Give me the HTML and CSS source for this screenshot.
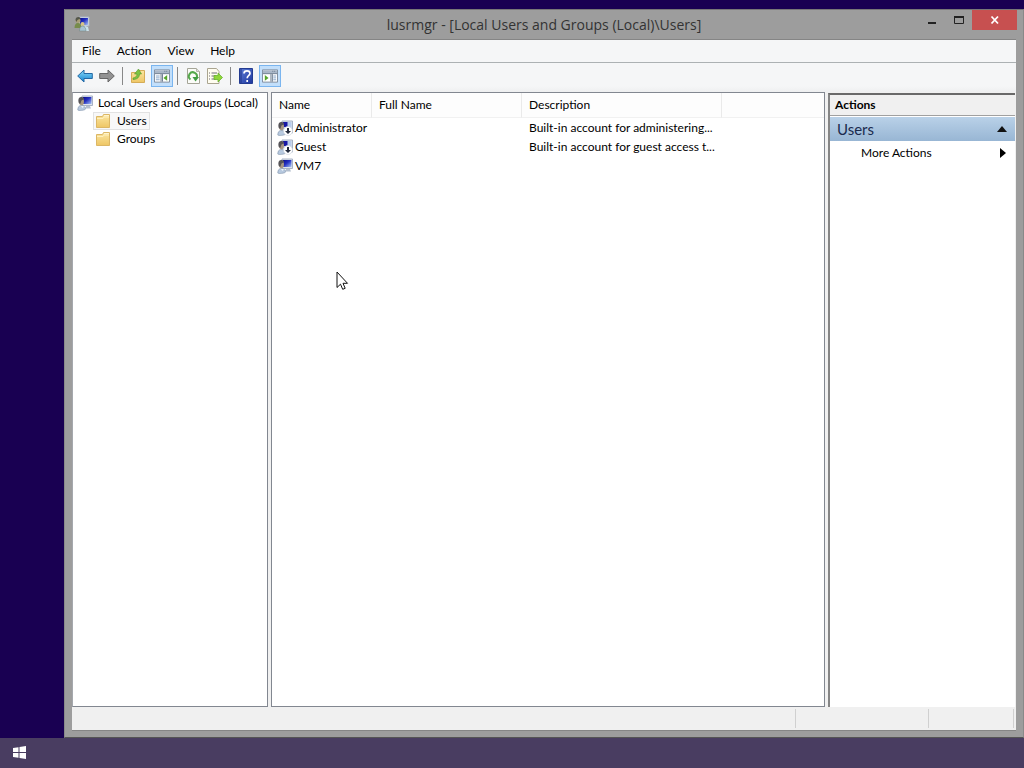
FILE: index.html
```html
<!DOCTYPE html>
<html lang="en">
<head>
<meta charset="utf-8">
<meta name="viewport" content="width=device-width, initial-scale=1">
<title>lusrmgr - [Local Users and Groups (Local)\Users]</title>
<link rel="stylesheet" href="styles.css">
</head>
<body>
<svg class="sprite" aria-hidden="true">
  <defs>
    <linearGradient id="screen" x1="0" y1="0" x2="1" y2="1"><stop offset="0" stop-color="#0b0b8c"/><stop offset=".45" stop-color="#2430c0"/><stop offset="1" stop-color="#a9c6f6"/></linearGradient>
    <linearGradient id="folder-fill" x1="0" y1="0" x2="0" y2="1"><stop offset="0" stop-color="#fbe6a2"/><stop offset="1" stop-color="#eec665"/></linearGradient>
    <linearGradient id="blue-arrow" x1="0" y1="0" x2="0" y2="1"><stop offset="0" stop-color="#8bdcfa"/><stop offset="1" stop-color="#1483cf"/></linearGradient>
    <linearGradient id="help-fill" x1="0" y1="0" x2="1" y2="1"><stop offset="0" stop-color="#5f7fd8"/><stop offset="1" stop-color="#1d359c"/></linearGradient>
    <symbol id="user" viewBox="0 0 16 16">
      <path d="M5 1h10.500v9.500H5z" fill="#dfe5ee" stroke="#a9b3c6"/>
      <path d="M6 2h8.500v7H6z" fill="url(#screen)"/>
      <path d="M9 11h4l1 2.500H8z" fill="#b4bfce"/>
      <path d="M.8 15c0-3 1.200-4.500 3.400-4.500 2.500 0 4.300 1.500 4.300 3.500 0 1.300-7.700 2-7.700 1z" fill="#b7c9df" stroke="#7d90aa" stroke-width=".6"/>
      <ellipse cx="4.500" cy="6.500" rx="2.500" ry="3.700" fill="#a79782"/>
      <path d="M1.500 7C.8 3.500 2.500 1.600 5 2c2 .3 2.300 1.700 1.800 2.700C4.500 4.500 4 6 3.600 8.500c-1 .5-1.800-.2-2.100-1.500z" fill="#565458"/>
      <path d="M4 11l1.500 2 1.500-2" fill="#edf4fa"/>
    </symbol>
    <symbol id="user-off" viewBox="0 0 16 16">
      <path d="M5 1h10.500v12H5z" fill="#dce4ee" stroke="#a6b2c5"/>
      <path d="M6 2h8.500v8H6z" fill="#b8ccec"/><path d="M6 2h4.500v5H6z" fill="#1717a5"/>
      <path d="M.8 15c0-3 1.200-4.500 3.400-4.500 2.500 0 4.300 1.500 4.300 3.500 0 1.300-7.700 2-7.700 1z" fill="#b7c9df" stroke="#7d90aa" stroke-width=".6"/>
      <ellipse cx="4.500" cy="6.500" rx="2.500" ry="3.700" fill="#a79782"/>
      <path d="M1.500 7C.8 3.500 2.500 1.600 5 2c2 .3 2.300 1.700 1.800 2.700C4.500 4.500 4 6 3.600 8.500c-1 .5-1.800-.2-2.100-1.500z" fill="#565458"/>
      <circle cx="11" cy="11" r="4.500" fill="#fff" stroke="#cbd2dc" stroke-width=".6"/>
      <path d="M10 8h2v3h2l-3 3-3-3h2z" fill="#222a3b"/>
    </symbol>
    <symbol id="users" viewBox="0 0 16 16">
      <path d="M5 1h10v9H5z" fill="#dfe5ee" stroke="#a9b3c6"/>
      <path d="M6 2h8v7H6z" fill="url(#screen)"/>
      <path d="M9 12l2-2 3 1 1 4H8z" fill="#c9e1ea"/>
      <circle cx="4" cy="4.500" r="2.500" fill="#a99f78"/><path d="M1.500 4c0-2 1-3 3-3s2 1.500 2 2C4 3 3 4 2.500 6z" fill="#55574a"/>
      <path d="M.5 12c0-3 1-5 3.500-5s3.500 2 3.500 5z" fill="#778c4b"/>
      <circle cx="8.500" cy="8" r="2" fill="#d7c488"/><path d="M5.500 15c0-3 1-5 3-5s3.500 2 3.500 5z" fill="#a6c3d4" stroke="#71857e" stroke-width=".5"/>
    </symbol>
    <symbol id="folder" viewBox="0 0 16 16">
      <path d="M1.500 3.500h6l1-2h6v13h-13z" fill="url(#folder-fill)" stroke="#dcb765"/>
      <path d="M9 2.500h5" stroke="#fff4cd"/><path d="M2 5.500h6l1-1.500h5" fill="none" stroke="#fff0bd"/>
    </symbol>
    <symbol id="back" viewBox="0 0 16 14"><path d="M.7 7L7 1v3.500h8.300v5H7V13z" fill="url(#blue-arrow)" stroke="#2569a4"/></symbol>
    <symbol id="forward" viewBox="0 0 16 14"><path d="M15.300 7L9 1v3.500H.7v5H9V13z" fill="#929292" stroke="#666"/></symbol>
    <symbol id="up-folder" viewBox="0 0 16 16">
      <path d="M1.500 4.500h6l1-2h6v12h-13z" fill="url(#folder-fill)" stroke="#d5ac57"/>
      <path d="M3 10c3-.5 4-2 4-4H4.500L8.500 1l3 5H9.500c0 3-2 5.500-6.500 5.500z" fill="#7cc342" stroke="#56952d" stroke-width=".6"/>
    </symbol>
    <symbol id="tree-pane" viewBox="0 0 17 16">
      <path d="M.5 1.500h16v13H.5z" fill="#fff" stroke="#7c899a"/><path d="M1 2h15v3H1z" fill="#aab7c8"/><path d="M11 3h1m1 0h1M1 5.500h15M7.500 6v8M9 6v8" stroke="#65758a"/>
      <path d="M2 8h4M2 10h4M2 12h4" stroke="#83a2c8"/><path d="M14 7v6l-4-3z" fill="#55a62b"/>
    </symbol>
    <symbol id="action-pane" viewBox="0 0 17 16">
      <path d="M.5 1.500h16v13H.5z" fill="#fff" stroke="#7c899a"/><path d="M1 2h15v3H1z" fill="#aab7c8"/><path d="M11 3h1m1 0h1M1 5.500h15M9.500 6v8M11 6v8" stroke="#65758a"/>
      <path d="M12 8h3M12 10h3M12 12h3" stroke="#83a2c8"/><path d="M3 7v6l4-3z" fill="#55a62b"/>
    </symbol>
    <symbol id="refresh" viewBox="0 0 16 16">
      <path d="M2.500.5h9l3 3v12h-12z" fill="#fbfcf8" stroke="#a5a597"/><path d="M11.500.5v3h3" fill="#ddd" stroke="#b8b8aa"/>
      <path d="M5.500 11.500A4 4 0 1 1 11.500 10" fill="none" stroke="#55a84b" stroke-width="2"/><path d="M7.500 9h6.500l-3.500 4.500z" fill="#419d43"/>
    </symbol>
    <symbol id="export" viewBox="0 0 16 16">
      <path d="M.5.5h9l2.500 3v12H.5z" fill="#fffdf0" stroke="#aaa590"/><path d="M2 5h1m1.500 0H10M2 8h1m1.500 0H9M2 11h1m1.500 0H9" stroke="#6f6b76"/>
      <path d="M7 7.500h4V5l4.500 4.500L11 14v-2.500H7z" fill="#8fd639" stroke="#5eae24" stroke-width=".7"/>
    </symbol>
    <symbol id="help" viewBox="0 0 14 16"><path d="M.5.500h13v15H.5z" fill="url(#help-fill)" stroke="#243c91"/><path d="M2 1v14" stroke="#1e3286"/><path d="M5 5.500C5 2 11 2 11 5.500c0 2-2.800 2-2.800 4.800M8.200 12v2" fill="none" stroke="#fff" stroke-width="1.700"/></symbol>
  </defs>
</svg>

<main class="desktop">
  <section class="window" aria-label="Local Users and Groups">
    <header class="titlebar">
      <svg class="icon title-icon"><use href="#users"/></svg>
      <h1 class="title">lusrmgr - [Local Users and Groups (Local)\Users]</h1>
      <div class="controls">
        <button class="control" aria-label="Minimize"><svg width="10" height="12"><path d="M1 8h8v2H1z" fill="#222"/></svg></button>
        <button class="control" aria-label="Maximize"><svg width="10" height="12"><path d="M.5 2.500h9v7h-9z" fill="none" stroke="#222"/><path d="M0 2h10v2H0z" fill="#222"/></svg></button>
        <button class="control close" aria-label="Close"><svg width="10" height="10"><path d="M1.500 1.500l6.500 7M8 1.500l-6.500 7" stroke="#fff" stroke-width="1.800"/></svg></button>
      </div>
    </header>
    <div class="client">
      <nav class="menubar" aria-label="Menu">
        <button class="menu">File</button><button class="menu">Action</button><button class="menu">View</button><button class="menu">Help</button>
      </nav>
      <div class="toolbar" role="toolbar" aria-label="Tools">
        <button class="tool" aria-label="Back"><svg class="icon"><use href="#back"/></svg></button>
        <button class="tool" aria-label="Forward"><svg class="icon"><use href="#forward"/></svg></button>
        <span class="separator"></span>
        <button class="tool" aria-label="Up one level"><svg class="icon"><use href="#up-folder"/></svg></button>
        <button class="tool pressed" aria-label="Show console tree"><svg class="icon"><use href="#tree-pane"/></svg></button>
        <span class="separator"></span>
        <button class="tool" aria-label="Refresh"><svg class="icon"><use href="#refresh"/></svg></button>
        <button class="tool" aria-label="Export list"><svg class="icon"><use href="#export"/></svg></button>
        <span class="separator"></span>
        <button class="tool" aria-label="Help"><svg class="icon"><use href="#help"/></svg></button>
        <button class="tool pressed" aria-label="Show action pane"><svg class="icon"><use href="#action-pane"/></svg></button>
      </div>
      <div class="panes">
        <nav class="pane tree" aria-label="Console tree">
          <button class="node"><svg class="icon"><use href="#user"/></svg><span class="label">Local Users and Groups (Local)</span></button>
          <button class="node child selected"><svg class="icon"><use href="#folder"/></svg><span class="label">Users</span></button>
          <button class="node child"><svg class="icon"><use href="#folder"/></svg><span class="label">Groups</span></button>
        </nav>
        <div class="pane list">
          <table class="users">
            <colgroup><col class="col-name"><col class="col-full"><col class="col-desc"><col></colgroup>
            <thead><tr><th scope="col">Name</th><th scope="col">Full Name</th><th scope="col">Description</th><td></td></tr></thead>
            <tbody>
              <tr><td><span class="account"><svg class="icon"><use href="#user-off"/></svg>Administrator</span></td><td></td><td>Built-in account for administering...</td><td></td></tr>
              <tr><td><span class="account"><svg class="icon"><use href="#user-off"/></svg>Guest</span></td><td></td><td>Built-in account for guest access t...</td><td></td></tr>
              <tr><td><span class="account"><svg class="icon"><use href="#user"/></svg>VM7</span></td><td></td><td></td><td></td></tr>
            </tbody>
          </table>
        </div>
        <aside class="actions">
          <h2 class="actions-title">Actions</h2>
          <button class="group">Users<svg width="10" height="6"><path d="M0 6l5-6 5 6z" fill="#111"/></svg></button>
          <button class="action">More Actions<svg width="6" height="10"><path d="M0 0l6 5-6 5z" fill="#000"/></svg></button>
        </aside>
      </div>
      <footer class="status"><span class="cell wide"></span><span class="cell mid"></span><span class="cell small"></span></footer>
    </div>
  </section>
</main>
<footer class="taskbar">
  <button class="start" aria-label="Start"><svg width="13" height="13"><path d="M0 2l5.500-.8V6H0zM6.500 1L13 0v6H6.500zM0 7h5.500v4.800L0 11zM6.500 7H13v6l-6.500-1z" fill="#fff"/></svg></button>
</footer>
<svg class="cursor" width="13" height="20" aria-hidden="true"><path d="M1 1v15.500l3.500-3.300 2.200 5.100 2.500-1-2.200-5h4.500z" fill="#fff" stroke="#111"/></svg>
</body>
</html>
```

FILE: styles.css
```css
* { box-sizing: border-box; }
body {
  margin: 0;
  height: 100vh;
  display: flex;
  flex-direction: column;
  overflow: hidden;
  background: #190052;
  color: #000;
  font: 12px/18px Lato, "Open Sans", sans-serif;
}
button {
  margin: 0;
  padding: 0;
  border: 0;
  background: none;
  color: inherit;
  font: inherit;
}
svg { display: block; flex: none; }
.sprite { position: absolute; width: 0; height: 0; }
.icon { width: 16px; height: 16px; }

.desktop { flex: 1; min-height: 0; display: flex; padding: 9px 0 0 64px; }
.window {
  flex: 1;
  min-width: 0;
  display: flex;
  flex-direction: column;
  padding: 0 7px 6px;
  background: #9d9d9d;
  border: 1px solid #898989;
  border-top-color: #777;
  border-bottom-color: #555;
}
.titlebar { height: 29px; display: grid; grid-template-columns: 1fr auto 1fr; }
.title-icon { margin: 6px 0 0 2px; }
.title { margin: 0; font: 14px/29px "Open Sans", sans-serif; color: #333; white-space: nowrap; }
.controls { display: flex; justify-content: flex-end; align-items: flex-start; margin-right: -1px; }
.control { width: 27px; height: 20px; display: flex; align-items: center; justify-content: center; }
.close { width: 45px; background: #c75050; }

.client {
  flex: 1;
  min-height: 0;
  display: flex;
  flex-direction: column;
  border: 1px solid #858585;
  border-width: 1px 0;
  background: #f0f0f0;
}
.menubar { height: 23px; display: flex; gap: 16px; padding: 0 10px; background: #f5f6f7; border-bottom: 1px solid #acb1b3; }
.menu { line-height: 22px; }
.toolbar { height: 29px; display: flex; align-items: center; padding: 0 2px 4px; background: linear-gradient(#f5f6f7 80%, #eeeff0); }
.tool { width: 22px; height: 22px; display: flex; align-items: center; justify-content: center; }
.pressed { margin-left: 2px; background: #c2dffb; border: 1px solid #7ab5ef; }
.separator { width: 1px; height: 18px; margin: 0 4px; background: #888; }

.menubar, .title { text-align: center; }
.panes { flex: 1; min-height: 0; display: flex; gap: 3px; }
.pane { background: #fff; border: 1px solid #828790; overflow: hidden; }
.tree { width: 196px; padding-top: 1px; border-left-color: #a5a8ad; }
.node { display: flex; align-items: center; gap: 2px; height: 18px; padding-left: 4px; white-space: nowrap; }
.label { padding: 0 3px; }
.child { margin-left: 20px; padding-left: 2px; }
.child .label { padding-left: 4px; }
.selected { background: #f8f8f8; box-shadow: inset 0 0 0 1px #e2e2e2; }
.list { flex: 1; min-width: 0; }

.users { width: 100%; table-layout: fixed; border-collapse: separate; border-spacing: 0; }
.users th, .users td { padding: 0 0 0 7px; height: 19px; text-align: left; font-weight: 400; white-space: nowrap; }
.users thead th, .users thead td { height: 25px; background: #fdfdfd; border-bottom: 1px solid #f1f1f1; }
.users thead th { border-right: 1px solid #eaeaea; }
.col-name { width: 100px; }
.col-full { width: 150px; }
.col-desc { width: 200px; }
.account { display: flex; align-items: center; gap: 2px; margin-left: -2px; }

.actions {
  width: 187px;
  margin: 1px 1px 0 0;
  display: flex;
  flex-direction: column;
  background: #fff;
  border: solid #696969;
  border-width: 2px 0 0 2px;
  border-left-color: #858585;
}
.actions-title { margin: 0; height: 21px; padding-left: 5px; background: #f0f0f0; border-bottom: 1px solid #a0a0a0; font-size: 12px; line-height: 20px; }
.group {
  height: 24px;
  margin: 1px 0 0;
  padding: 0 8px 0 7px;
  display: flex;
  align-items: center;
  justify-content: space-between;
  background: linear-gradient(#b9d1e8, #98b6d4);
  color: #1b2b4e;
  font-size: 15px;
}
.action { height: 24px; padding: 0 9px 0 31px; display: flex; align-items: center; justify-content: space-between; }

.status { height: 23px; display: flex; padding: 2px 2px 2px 0; }
.cell { border-right: 1px solid #d0d0d0; }
.wide { flex: 1; }
.mid { width: 133px; }
.small { width: 85px; }

.taskbar { height: 30px; display: flex; align-items: center; padding: 0 0 2px 13px; background: #493d61; }
.cursor { position: absolute; left: 336px; top: 271px; }
```
